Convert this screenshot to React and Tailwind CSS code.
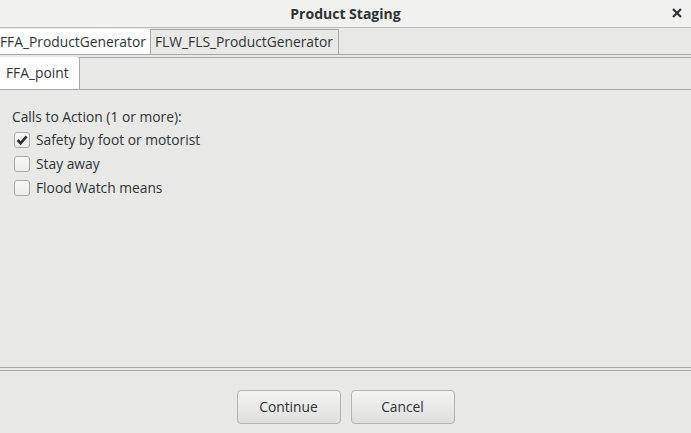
import { useState } from 'react'

const ITEMS = [
  { id: 'safety', label: 'Safety by foot or motorist', checked: true },
  { id: 'stay', label: 'Stay away', checked: false },
  { id: 'watch', label: 'Flood Watch means', checked: false },
]

function CheckRow({ label, checked, onToggle }) {
  return (
    <label className="flex items-center h-6 cursor-pointer" onClick={onToggle}>
      <span className="w-[16px] h-[16px] ml-[12px] mr-[6px] rounded-[3px] border border-[#a8a8a6] bg-gradient-to-b from-[#f8f8f7] to-[#ececea] flex items-center justify-center">
        {checked && (
          <svg width="12" height="12" viewBox="0 0 12 12">
            <path d="M1.6 6 L4.6 9.2 L10.6 2.4" fill="none" stroke="#2e3436" strokeWidth="2.6" />
          </svg>
        )}
      </span>
      <span>{label}</span>
    </label>
  )
}

export default function App() {
  const [items, setItems] = useState(ITEMS)
  const toggle = (id) =>
    setItems((list) => list.map((i) => (i.id === id ? { ...i, checked: !i.checked } : i)))

  return (
    <div
      className="w-[691px] h-[433px] bg-[#e8e8e7] text-[#2e3436] text-[13.8px] flex flex-col overflow-hidden"
      style={{ fontFamily: '"Open Sans", "DejaVu Sans", sans-serif' }}
    >
      {/* title bar */}
      <div className="h-[28px] shrink-0 bg-[#f1f1f0] border-b border-[#bdbdbb] flex items-center justify-center relative">
        <span className="font-bold text-[14px]">Product Staging</span>
        <svg className="absolute right-[9px] top-[8px]" width="10" height="10" viewBox="0 0 10 10">
          <path d="M1 1 L9 9 M9 1 L1 9" stroke="#2e3436" strokeWidth="2.2" />
        </svg>
      </div>

      {/* outer tabs */}
      <div className="h-[26px] shrink-0 mt-[1px] flex items-end border-b border-[#a8a8a6]">
        <div className="h-[25px] w-[150px] bg-white flex items-center pt-[1px]">
          FFA_ProductGenerator
        </div>
        <div className="h-[25px] w-[189px] bg-[#e8e8e7] border border-b-0 border-[#a8a8a6] flex items-center pl-[4px] pt-[1px]">
          FLW_FLS_ProductGenerator
        </div>
      </div>

      {/* inner notebook */}
      <div className="flex-1 flex flex-col mt-[2px] border-t border-[#a8a8a6]">
        <div className="h-[32px] shrink-0 flex items-end border-b border-[#a8a8a6]">
          <div className="h-[32px] w-[80px] bg-white border-r border-[#a8a8a6] rounded-tr-[3px] flex items-center pl-[6px]">
            FFA_point
          </div>
        </div>
        <div className="flex-1 mx-[2px] mt-[2px] bg-[#e8e8e7] pt-[14px]">
          <div className="pl-[10px] h-[22px] flex items-center">Calls to Action (1 or more):</div>
          {items.map((i) => (
            <CheckRow key={i.id} label={i.label} checked={i.checked} onToggle={() => toggle(i.id)} />
          ))}
        </div>
        <div className="h-[4px] shrink-0 border-t border-b border-[#a8a8a6] mt-[2px]" />
      </div>

      {/* buttons */}
      <div className="h-[62px] shrink-0 flex items-start justify-center gap-[10px] pt-[19px]">
        <button className="w-[104px] h-[34px] rounded-[4px] border border-[#b3b3b1] bg-gradient-to-b from-[#f4f4f3] to-[#dfdfdd]">
          Continue
        </button>
        <button className="w-[104px] h-[34px] rounded-[4px] border border-[#b3b3b1] bg-gradient-to-b from-[#f4f4f3] to-[#dfdfdd]">
          Cancel
        </button>
      </div>
    </div>
  )
}
